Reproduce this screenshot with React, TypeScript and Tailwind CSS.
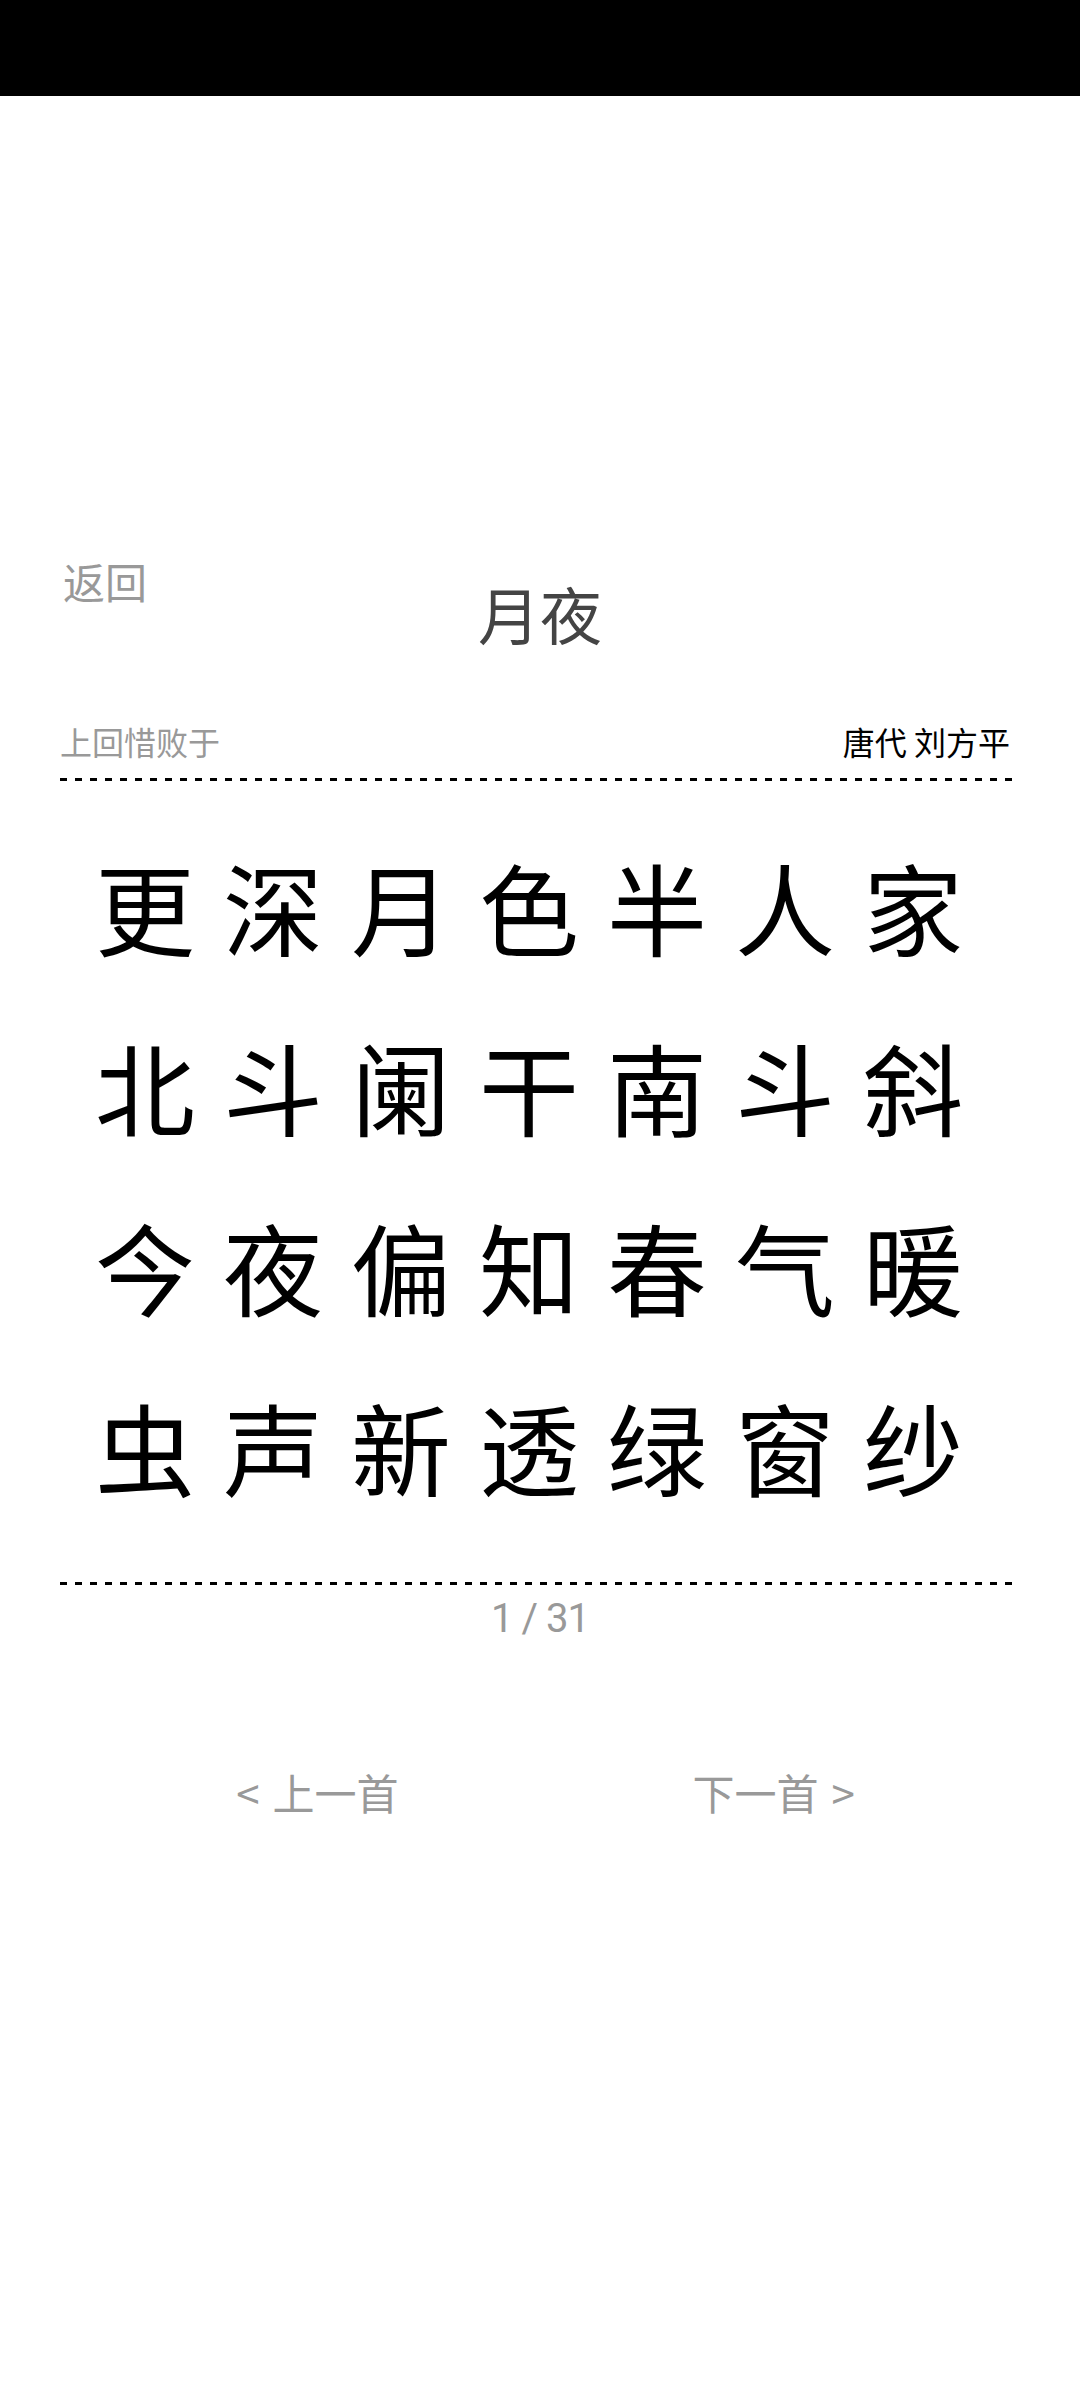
const lines = ["更深月色半人家", "北斗阑干南斗斜", "今夜偏知春气暖", "虫声新透绿窗纱"];

function Dash() {
  return (
    <div className="h-[3px] bg-[image:repeating-linear-gradient(to_right,#000_0px,#000_7px,transparent_7px,transparent_15px)]" />
  );
}

export default function App() {
  return (
    <div className="min-h-[2400px] bg-white font-['Noto_Sans_CJK_SC','Noto_Sans',sans-serif]">
      <div className="h-[96px] bg-black" />
      <div className="px-[60px]">
        <div className="mt-[464px] grid grid-cols-[1fr_auto_1fr] items-start">
          <div className="pl-[3px] text-[42px] leading-[42px] text-[#999999]">返回</div>
          <div className="mt-[22px] text-[62px] leading-[62px] text-[#444444]">月夜</div>
          <div />
        </div>
        <div className="mt-[81px] flex items-center justify-between pr-[10px] text-[32px] leading-[32px]">
          <span className="text-[#999999]">上回惜败于</span>
          <span className="text-black">唐代 刘方平</span>
        </div>
        <div className="mt-[21px]">
          <Dash />
        </div>
        <div className="mt-[35px] pl-[6px]">
          {lines.map((l) => (
            <div key={l} className="text-center text-[100px] leading-[180px] tracking-[28px] text-black">
              {l}
            </div>
          ))}
        </div>
        <div className="mt-[46px]">
          <Dash />
        </div>
        <div className="mt-[14px] text-center font-['Roboto',sans-serif] text-[40px] leading-[40px] tracking-[-1px] text-[#999999]">
          1 / 31
        </div>
        <div className="mt-[132px] flex justify-center gap-[294px] pl-[11px] text-[42px] leading-[42px] text-[#999999]">
          <div className="flex items-center gap-[13px]">
            <span>&lt;</span>
            <span>上一首</span>
          </div>
          <div className="flex items-center gap-[13px]">
            <span>下一首</span>
            <span>&gt;</span>
          </div>
        </div>
      </div>
    </div>
  );
}
